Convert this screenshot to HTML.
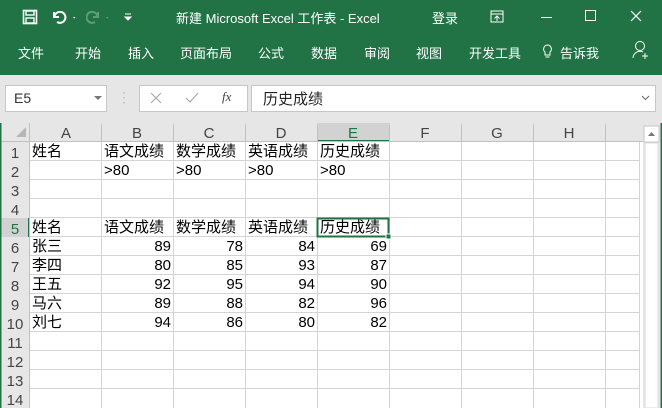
<!DOCTYPE html>
<html><head><meta charset="utf-8"><style>
*{margin:0;padding:0;box-sizing:border-box}
body{width:662px;height:408px;overflow:hidden;background:#fff;position:relative;font-family:"Liberation Sans","Noto Sans CJK SC",sans-serif}
.a{position:absolute}
.top{left:0;top:0;width:662px;height:75px;background:#217346;color:#fff}
.t{position:absolute;font-size:13px;color:#fff;white-space:nowrap}
.gray{left:0;top:75px;width:662px;height:48px;background:#e6e6e6}
.box{background:#fff;border:1px solid #c6c6c6}
.cell{position:absolute;font-size:15px;color:#000;white-space:nowrap;line-height:19px;height:19px}
.r{text-align:right}
</style></head><body>
<div class="a top">
 <svg class="a" style="left:22px;top:9px" width="16" height="16" viewBox="0 0 16 16"><rect x="1.5" y="1.5" width="13" height="13" fill="none" stroke="#fff" stroke-width="1.6"/><rect x="4" y="2" width="8" height="4" fill="none" stroke="#fff" stroke-width="1.4"/><rect x="4" y="9" width="8" height="5" fill="none" stroke="#fff" stroke-width="1.4"/></svg>
 <svg class="a" style="left:51px;top:9px" width="28" height="16" viewBox="0 0 28 16"><path d="M3 3v5h5M3.5 7.5A5.5 5.5 0 1 1 6 13" fill="none" stroke="#fff" stroke-width="2"/><path d="M22 8l2.5 0-1.25 1.6z" fill="#fff"/></svg>
 <svg class="a" style="left:86px;top:9px" width="26" height="16" viewBox="0 0 26 16"><path d="M12 3v5H7M11.5 7.5A5.5 5.5 0 1 0 9 13" fill="none" stroke="#5f9d78" stroke-width="2"/><path d="M20 8l2.5 0-1.25 1.6z" fill="#5f9d78"/></svg>
 <svg class="a" style="left:124px;top:11px" width="8" height="12" viewBox="0 0 8 12"><path d="M1 3h6M1 6h6l-3 3z" fill="#fff" stroke="#fff" stroke-width="1"/></svg>
 <div class="t" style="left:176px;top:8px">新建 Microsoft Excel 工作表 - Excel</div>
 <div class="t" style="left:432px;top:8px">登录</div>
 <svg class="a" style="left:490px;top:10px" width="14" height="13"><rect x="1" y="1" width="12" height="11" fill="none" stroke="#fff"/><path d="M1 4h12M7 6v5M4.5 8.5L7 6l2.5 2.5" fill="none" stroke="#fff"/></svg>
 <div class="a" style="left:541px;top:17px;width:11px;height:1px;background:#fff"></div>
 <div class="a" style="left:585px;top:10px;width:11px;height:11px;border:1px solid #fff"></div>
 <svg class="a" style="left:630px;top:10px" width="12" height="12"><path d="M1 1l10 10M11 1L1 11" stroke="#fff" stroke-width="1.2"/></svg>
 <div class="t" style="left:18px;top:43px">文件</div>
 <div class="t" style="left:75px;top:43px">开始</div>
 <div class="t" style="left:128px;top:43px">插入</div>
 <div class="t" style="left:180px;top:43px">页面布局</div>
 <div class="t" style="left:258px;top:43px">公式</div>
 <div class="t" style="left:311px;top:43px">数据</div>
 <div class="t" style="left:364px;top:43px">审阅</div>
 <div class="t" style="left:416px;top:43px">视图</div>
 <div class="t" style="left:469px;top:43px">开发工具</div>
 <svg class="a" style="left:542px;top:44px" width="11" height="16"><path d="M5.5 1a4 4 0 0 0-2.5 7v3h5V8a4 4 0 0 0-2.5-7zM3.5 13h4" fill="none" stroke="#fff"/></svg>
 <div class="t" style="left:560px;top:43px">告诉我</div>
 <svg class="a" style="left:632px;top:40px" width="18" height="20"><circle cx="8" cy="6" r="4.5" fill="none" stroke="#fff"/><path d="M1 18a7 7 0 0 1 10-6M13 13v6M10 16h6" fill="none" stroke="#fff"/></svg>
</div>
<div class="a gray"></div>
<div class="a box" style="left:5px;top:85px;width:102px;height:27px"></div>
<div class="a" style="left:14px;top:90px;font-size:14px;color:#333">E5</div>
<div class="a" style="left:94px;top:96px;border-left:4px solid transparent;border-right:4px solid transparent;border-top:4px solid #777"></div>
<div class="a" style="left:122px;top:90px;color:#aaa;font-size:12px;line-height:5px">·<br>·<br>·</div>
<div class="a box" style="left:139px;top:85px;width:109px;height:27px"></div>
<svg class="a" style="left:150px;top:92px" width="12" height="12"><path d="M1 1l10 10M11 1L1 11" stroke="#aaa" stroke-width="1.2"/></svg>
<svg class="a" style="left:185px;top:92px" width="14" height="12"><path d="M1 6l4 4 8-9" fill="none" stroke="#aaa" stroke-width="1.2"/></svg>
<div class="a" style="left:222px;top:89px;font-family:'Liberation Serif',serif;font-style:italic;font-size:13px;color:#444">fx</div>
<div class="a box" style="left:251px;top:85px;width:405px;height:27px"></div>
<div class="a" style="left:263px;top:88px;font-size:15px;color:#222">历史成绩</div>
<svg class="a" style="left:641px;top:95px" width="9" height="6"><path d="M1 1l3.5 3.5L8 1" fill="none" stroke="#666"/></svg>
<svg class="a" style="left:0;top:123px" width="662" height="285">
<rect x="0" y="0" width="662" height="285" fill="#fff"/>
<rect x="0" y="0" width="643" height="19" fill="#e6e6e6"/>
<rect x="0" y="0" width="30" height="285" fill="#e6e6e6"/>
<rect x="317" y="0" width="72" height="19" fill="#d2d2d2"/>
<rect x="317" y="17" width="72" height="2" fill="#217346"/>
<rect x="0" y="95" width="30" height="19" fill="#d2d2d2"/>
<rect x="28" y="95" width="2" height="19" fill="#217346"/>
<path d="M16 14l10 0 0-10z" fill="#b7b7b7"/>
<g stroke="#d4d4d4" stroke-width="1">
<path d="M101.5 0v285M173.5 0v285M245.5 0v285M317.5 0v285M389.5 0v285M461.5 0v285M533.5 0v285M605.5 0v285M639.5 19v266"/>
<path d="M30 37.5h610M30 56.5h610M30 75.5h610M30 94.5h610M30 113.5h610M30 132.5h610M30 151.5h610M30 170.5h610M30 189.5h610M30 208.5h610M30 227.5h610M30 246.5h610M30 265.5h610"/>
</g>
<g stroke="#c0c0c0"><path d="M0 18.5h643M29.5 0v285"/><path d="M101.5 2v16M173.5 2v16M245.5 2v16M317.5 2v16M389.5 2v16M461.5 2v16M533.5 2v16M605.5 2v16"/></g>
<rect x="643" y="0" width="19" height="285" fill="#e6e6e6"/>
<rect x="644" y="3" width="15" height="16" fill="#fff" stroke="#c6c6c6"/>
<path d="M648 13l3.5-4 3.5 4z" fill="#777"/>
<rect x="645" y="20" width="13" height="265" fill="#fff" stroke="#ddd"/>
<rect x="317.5" y="95.5" width="71" height="18" fill="none" stroke="#217346" stroke-width="2"/>
<rect x="386" y="111" width="5" height="5" fill="#217346" stroke="#fff"/>
<rect x="0" y="0" width="1.5" height="285" fill="#217346"/>
<rect x="660.5" y="0" width="1.5" height="285" fill="#217346"/>
<g font-family="Liberation Sans" font-size="15" fill="#444" text-anchor="middle">
<text x="66" y="15">A</text><text x="137" y="15">B</text><text x="209" y="15">C</text><text x="281" y="15">D</text><text x="353" y="15" fill="#217346">E</text><text x="425" y="15">F</text><text x="497" y="15">G</text><text x="569" y="15">H</text>
</g>
<g font-family="Liberation Sans" font-size="15" fill="#444" text-anchor="middle">
<text x="15" y="35">1</text><text x="15" y="54">2</text><text x="15" y="73">3</text><text x="15" y="92">4</text><text x="15" y="111" fill="#217346">5</text><text x="15" y="130">6</text><text x="15" y="149">7</text><text x="15" y="168">8</text><text x="15" y="187">9</text><text x="15" y="206">10</text><text x="15" y="225">11</text><text x="15" y="244">12</text><text x="15" y="263">13</text><text x="15" y="282">14</text>
</g>
</svg>
<div style="position:absolute;left:0;top:142px">
<div class="cell" style="left:32px;top:0">姓名</div><div class="cell" style="left:104px;top:0">语文成绩</div><div class="cell" style="left:176px;top:0">数学成绩</div><div class="cell" style="left:248px;top:0">英语成绩</div><div class="cell" style="left:320px;top:0">历史成绩</div>
<div class="cell" style="left:104px;top:19px">&gt;80</div><div class="cell" style="left:176px;top:19px">&gt;80</div><div class="cell" style="left:248px;top:19px">&gt;80</div><div class="cell" style="left:320px;top:19px">&gt;80</div>
<div class="cell" style="left:32px;top:76px">姓名</div><div class="cell" style="left:104px;top:76px">语文成绩</div><div class="cell" style="left:176px;top:76px">数学成绩</div><div class="cell" style="left:248px;top:76px">英语成绩</div><div class="cell" style="left:320px;top:76px">历史成绩</div>
</div>
<div style="position:absolute;left:0;top:237px">
<div class="cell" style="left:32px;top:0">张三</div><div class="cell r" style="left:101px;width:70px;top:0">89</div><div class="cell r" style="left:173px;width:70px;top:0">78</div><div class="cell r" style="left:245px;width:70px;top:0">84</div><div class="cell r" style="left:317px;width:70px;top:0">69</div>
<div class="cell" style="left:32px;top:19px">李四</div><div class="cell r" style="left:101px;width:70px;top:19px">80</div><div class="cell r" style="left:173px;width:70px;top:19px">85</div><div class="cell r" style="left:245px;width:70px;top:19px">93</div><div class="cell r" style="left:317px;width:70px;top:19px">87</div>
<div class="cell" style="left:32px;top:38px">王五</div><div class="cell r" style="left:101px;width:70px;top:38px">92</div><div class="cell r" style="left:173px;width:70px;top:38px">95</div><div class="cell r" style="left:245px;width:70px;top:38px">94</div><div class="cell r" style="left:317px;width:70px;top:38px">90</div>
<div class="cell" style="left:32px;top:57px">马六</div><div class="cell r" style="left:101px;width:70px;top:57px">89</div><div class="cell r" style="left:173px;width:70px;top:57px">88</div><div class="cell r" style="left:245px;width:70px;top:57px">82</div><div class="cell r" style="left:317px;width:70px;top:57px">96</div>
<div class="cell" style="left:32px;top:76px">刘七</div><div class="cell r" style="left:101px;width:70px;top:76px">94</div><div class="cell r" style="left:173px;width:70px;top:76px">86</div><div class="cell r" style="left:245px;width:70px;top:76px">80</div><div class="cell r" style="left:317px;width:70px;top:76px">82</div>
</div>
</body></html>
